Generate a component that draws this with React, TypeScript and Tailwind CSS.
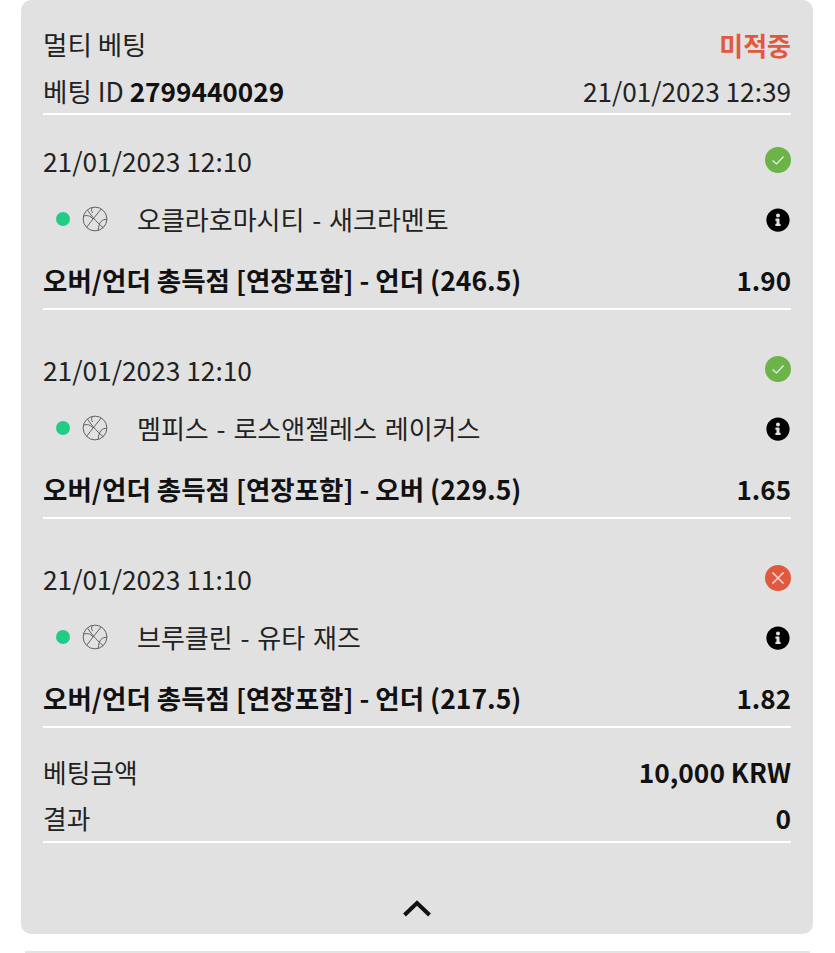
import { FaInfoCircle } from "react-icons/fa";

const font = { fontFamily: '"Noto Sans CJK KR", "Noto Sans", sans-serif' };

function Ball() {
  return (
    <svg width="26" height="26" viewBox="0 0 28 28" fill="none" stroke="#555" strokeWidth="1" className="shrink-0">
      <circle cx="14" cy="14" r="12.8" />
      <path d="M6 4.5 C9 9 15 17 23 23.5" />
      <path d="M20.5 3.3 C17 8 10 16 5 23" />
      <path d="M1.8 11 C5 9.5 9 10.5 12 14" />
      <path d="M26.5 14.5 C22 14 18 17 17.5 26" />
      <path d="M11 1.8 C10 4 10 5.5 11.5 7.5" />
    </svg>
  );
}

function Status({ ok }: { ok: boolean }) {
  return (
    <svg width="26" height="26" viewBox="0 0 26 26" fill="none" className="mb-[2px]">
      <circle cx="13" cy="13" r="13" fill={ok ? "#6cb34a" : "#e0593e"} />
      {ok ? (
        <path d="M7.5 13.5 L11.5 17 L18.5 9.5" stroke="#e8f3e2" strokeWidth="1.2" />
      ) : (
        <path d="M7.5 7.5 L18.5 18.5 M18.5 7.5 L7.5 18.5" stroke="#f8dcd5" strokeWidth="1.5" />
      )}
    </svg>
  );
}

function Bet({ date, teams, market, odds, ok }: { date: string; teams: string; market: string; odds: string; ok: boolean }) {
  return (
    <div className="border-b-2 border-white h-[195px] flex flex-col">
      <div className="flex items-center justify-between h-[48px] mt-[22px]">
        <span className="text-[26.3px] leading-[36px] text-[#222]">{date}</span>
        <Status ok={ok} />
      </div>
      <div className="flex items-center justify-between h-[36px] mt-[16px]">
        <div className="flex items-center pl-[13px]">
          <span className="w-[14px] h-[14px] rounded-full bg-[#22cc88] shrink-0" />
          <span className="ml-[12px]"><Ball /></span>
          <span className="ml-[29px] text-[26px] leading-[36px] text-[#222] [word-spacing:2px]">{teams}</span>
        </div>
        <FaInfoCircle className="text-black mr-[1px] mt-[1px]" size={24} />
      </div>
      <div className="flex items-center justify-between h-[36px] mt-[25px] text-[26.5px] font-bold text-[#111]">
        <span>{market}</span>
        <span className="text-[26px] mb-[1px]">{odds}</span>
      </div>
    </div>
  );
}

export default function App() {
  return (
    <div className="w-[835px] h-[953px] bg-white overflow-hidden relative" style={font}>
      <div className="ml-[21px] mr-[22px] h-[934px] bg-[#e1e1e1] rounded-[10px] px-[22px] flex flex-col">
        <div className="flex items-center justify-between mt-[26px] h-[36px]">
          <span className="text-[26.5px] text-[#222]">멀티 베팅</span>
          <span className="text-[26px] font-bold text-[#e0593e]">미적중</span>
        </div>
        <div className="flex items-center justify-between mt-[11px] h-[38px] pb-[1px]">
          <span className="text-[26.5px] text-[#222]">베팅 ID <b className="text-[26.2px] text-[#111]">2799440029</b></span>
          <span className="text-[26.2px] text-[#222]">21/01/2023 12:39</span>
        </div>
        <div className="h-[2px] bg-white mt-[2px]" />
        <Bet date="21/01/2023 12:10" teams="오클라호마시티 - 새크라멘토" market="오버/언더 총득점 [연장포함] - 언더 (246.5)" odds="1.90" ok />
        <div className="h-[14px]" />
        <Bet date="21/01/2023 12:10" teams="멤피스 - 로스앤젤레스 레이커스" market="오버/언더 총득점 [연장포함] - 오버 (229.5)" odds="1.65" ok />
        <div className="h-[14px]" />
        <Bet date="21/01/2023 11:10" teams="브루클린 - 유타 재즈" market="오버/언더 총득점 [연장포함] - 언더 (217.5)" odds="1.82" ok={false} />
        <div className="flex items-center justify-between mt-[26px] h-[36px]">
          <span className="text-[25.7px] text-[#222]">베팅금액</span>
          <span className="text-[26.3px] font-bold text-[#111]">10,000 KRW</span>
        </div>
        <div className="flex items-center justify-between mt-[10px] h-[36px]">
          <span className="text-[25.7px] text-[#222]">결과</span>
          <span className="text-[26.3px] font-bold text-[#111]">0</span>
        </div>
        <div className="h-[2px] bg-white mt-[5px]" />
        <div className="flex justify-center mt-[56px]">
          <svg width="30" height="18" viewBox="0 0 30 18" fill="none" stroke="#111" strokeWidth="4">
            <path d="M2.5 16 L15 4 L27.5 16" />
          </svg>
        </div>
      </div>
      <div className="mx-[25px] mt-[17px] h-[2px] bg-[#e4e4e4]" />
    </div>
  );
}
